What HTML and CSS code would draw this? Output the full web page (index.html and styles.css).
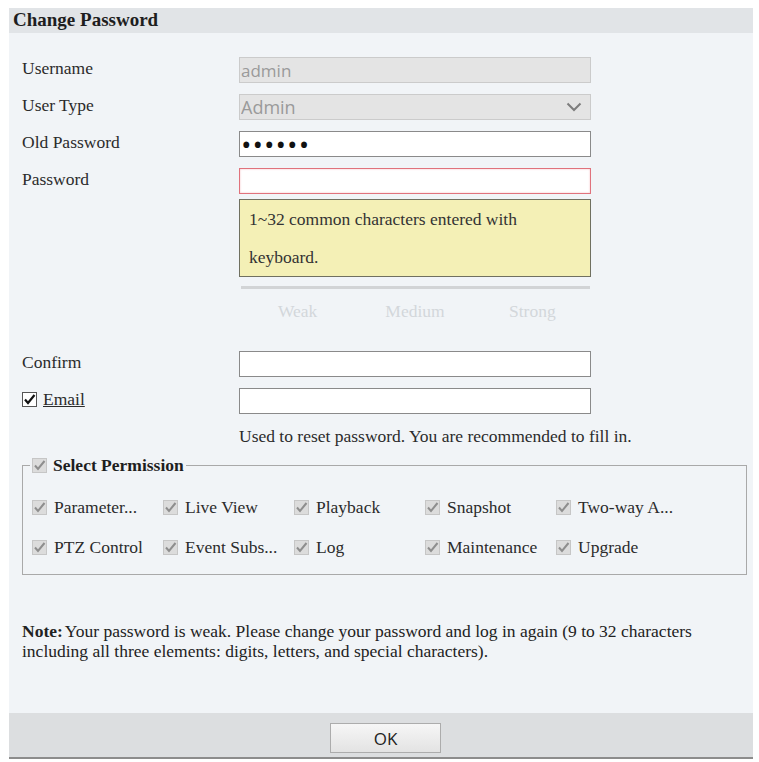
FILE: index.html
```html
<!DOCTYPE html>
<html lang="en">

<head>
    <meta charset="UTF-8" />
    <title>Change Password</title>
    <link rel="stylesheet" href="styles.css">
</head>

<body>
    <div class="dialog">
        <div class="dialog-title">Change Password</div>

        <div class="dialog-body">
            <div class="form-row">
                <label class="form-label">Username</label>
                <input class="form-field is-disabled" value="admin" readonly>
            </div>
            <div class="form-row">
                <label class="form-label">User Type</label>
                <div class="select-wrap">
                    <select class="form-field is-disabled select-field" disabled>
                        <option>Admin</option>
                    </select>
                    <svg class="select-arrow" width="16" height="10" viewBox="0 0 16 10">
                        <path d="M1.5 1.5 L8 8 L14.5 1.5" fill="none" stroke="#7d7d7d" stroke-width="2" />
                    </svg>
                </div>
            </div>
            <div class="form-row">
                <label class="form-label">Old Password</label>
                <input type="password" class="form-field pwd-field" value="123456">
            </div>
            <div class="form-row">
                <label class="form-label">Password</label>
                <input type="password" class="form-field is-error">
            </div>

            <!-- hint for password -->
            <div class="pwd-tip">1~32 common characters entered with keyboard.</div>

            <div class="strength">
                <div class="strength-bar"></div>
                <div class="strength-labels">
                    <span>Weak</span>
                    <span>Medium</span>
                    <span>Strong</span>
                </div>
            </div>

            <div class="form-row row-confirm">
                <label class="form-label">Confirm</label>
                <input type="password" class="form-field">
            </div>
            <div class="form-row">
                <label class="form-label">
                    <span class="cb cb-on">
                        <svg width="13" height="13" viewBox="0 0 13 13">
                            <path d="M2 6.5 L5 10 L11.5 2" fill="none" stroke="#111" stroke-width="2.2" />
                        </svg>
                    </span>
                    <span class="email-text">Email</span>
                </label>
                <input type="text" class="form-field">
            </div>
            <div class="hint">Used to reset password. You are recommended to fill in.</div>

            <fieldset class="perm">
                <legend class="perm-legend">
                    <span class="cb cb-off">
                        <svg width="13" height="13" viewBox="0 0 13 13">
                            <path d="M2 6.5 L5 10 L11.5 2" fill="none" stroke="#8e8e8e" stroke-width="2" />
                        </svg>
                    </span>
                    Select Permission
                </legend>
                <div class="perm-grid">
                    <div class="perm-item"><span class="cb cb-off"><svg width="13" height="13" viewBox="0 0 13 13"><path d="M2 6.5 L5 10 L11.5 2" fill="none" stroke="#8e8e8e" stroke-width="2" /></svg></span>Parameter...</div>
                    <div class="perm-item"><span class="cb cb-off"><svg width="13" height="13" viewBox="0 0 13 13"><path d="M2 6.5 L5 10 L11.5 2" fill="none" stroke="#8e8e8e" stroke-width="2" /></svg></span>Live View</div>
                    <div class="perm-item"><span class="cb cb-off"><svg width="13" height="13" viewBox="0 0 13 13"><path d="M2 6.5 L5 10 L11.5 2" fill="none" stroke="#8e8e8e" stroke-width="2" /></svg></span>Playback</div>
                    <div class="perm-item"><span class="cb cb-off"><svg width="13" height="13" viewBox="0 0 13 13"><path d="M2 6.5 L5 10 L11.5 2" fill="none" stroke="#8e8e8e" stroke-width="2" /></svg></span>Snapshot</div>
                    <div class="perm-item"><span class="cb cb-off"><svg width="13" height="13" viewBox="0 0 13 13"><path d="M2 6.5 L5 10 L11.5 2" fill="none" stroke="#8e8e8e" stroke-width="2" /></svg></span>Two-way A...</div>
                    <div class="perm-item"><span class="cb cb-off"><svg width="13" height="13" viewBox="0 0 13 13"><path d="M2 6.5 L5 10 L11.5 2" fill="none" stroke="#8e8e8e" stroke-width="2" /></svg></span>PTZ Control</div>
                    <div class="perm-item"><span class="cb cb-off"><svg width="13" height="13" viewBox="0 0 13 13"><path d="M2 6.5 L5 10 L11.5 2" fill="none" stroke="#8e8e8e" stroke-width="2" /></svg></span>Event Subs...</div>
                    <div class="perm-item"><span class="cb cb-off"><svg width="13" height="13" viewBox="0 0 13 13"><path d="M2 6.5 L5 10 L11.5 2" fill="none" stroke="#8e8e8e" stroke-width="2" /></svg></span>Log</div>
                    <div class="perm-item"><span class="cb cb-off"><svg width="13" height="13" viewBox="0 0 13 13"><path d="M2 6.5 L5 10 L11.5 2" fill="none" stroke="#8e8e8e" stroke-width="2" /></svg></span>Maintenance</div>
                    <div class="perm-item"><span class="cb cb-off"><svg width="13" height="13" viewBox="0 0 13 13"><path d="M2 6.5 L5 10 L11.5 2" fill="none" stroke="#8e8e8e" stroke-width="2" /></svg></span>Upgrade</div>
                </div>
            </fieldset>

            <p class="note"><b class="note-head">Note:</b>Your password is weak. Please change your password and log in again (9 to 32 characters including all three elements: digits, letters, and special characters).</p>
        </div>

        <div class="dialog-footer">
            <button class="btn-ok">OK</button>
        </div>
    </div>
</body>

</html>
```

FILE: styles.css
```css
/* base reset */
* {
    margin: 0;
    padding: 0;
    box-sizing: border-box;
}

html,
body {
    width: 100%;
    height: 100%;
    background-color: #fff;
    font-family: "Liberation Serif", "Times New Roman", serif;
    font-size: 17.5px;
    color: #2b2b2b;
    overflow: hidden;
}

/* dialog window */
.dialog {
    display: flex;
    flex-direction: column;
    width: 744px;
    height: 751px;
    margin: 8px 0 0 9px;
    background-color: #f1f4f7;
}

.dialog-title {
    height: 25px;
    line-height: 24px;
    padding-left: 4px;
    background-color: #e1e4e7;
    font-size: 19px;
    font-weight: bold;
    color: #1e1e1e;
}

.dialog-body {
    flex: 1;
    padding: 24px 0 0 13px;
}

/* form rows */
.form-row {
    display: flex;
    align-items: center;
    height: 26px;
    margin-bottom: 11px;
}

.form-label {
    display: flex;
    align-items: center;
    width: 217px;
    flex-shrink: 0;
    margin-top: -3px;
}

.form-field {
    width: 352px;
    height: 26px;
    border: 1px solid #8a8a8a;
    background-color: #fff;
    padding: 0 1px;
    font-family: "Open Sans", "Liberation Sans", sans-serif;
    font-size: 17px;
    color: #333;
    outline: none;
}

.form-field.is-disabled {
    background-color: #e4e4e4;
    border-color: #cbcbcb;
    color: #9a9a9a;
}

.form-field.is-error {
    border-color: #e0727c;
    box-shadow: inset 0 0 2px #f4b6bb;
}

.pwd-field {
    font-size: 28px;
    letter-spacing: 1px;
    color: #111;
}

.select-wrap {
    position: relative;
    height: 26px;
}

.select-field {
    appearance: none;
    -webkit-appearance: none;
    font-size: 18px;
    color: #8c8c8c;
    opacity: 1;
}

.select-arrow {
    position: absolute;
    right: 9px;
    top: 8px;
}

/* password hint */
.pwd-tip {
    width: 352px;
    height: 78px;
    margin: -6px 0 0 217px;
    padding: 0 50px 0 9px;
    border: 1px solid #707060;
    background-color: #f4f0b6;
    line-height: 38px;
    color: #333;
}

.strength {
    width: 352px;
    margin-left: 217px;
}

.strength-bar {
    height: 3px;
    margin: 9px 1px 0 2px;
    background-color: #d2d4d6;
}

.strength-labels {
    display: flex;
    margin-top: 12px;
    line-height: 20px;
    color: #d3d7db;
}

.strength-labels span {
    flex: 1;
    text-align: center;
}

.row-confirm {
    margin-top: 30px;
}

/* checkboxes */
.cb {
    display: inline-flex;
    align-items: center;
    justify-content: center;
    width: 15px;
    height: 15px;
    flex-shrink: 0;
}

.cb-on {
    background-color: #fff;
    border: 1px solid #555;
}

.cb-off {
    background-color: #dcdcdc;
    border: 1px solid #c6c6c6;
}

.email-text {
    margin-left: 6px;
    text-decoration: underline;
}

.hint {
    margin: 12px 0 0 217px;
    line-height: 20px;
}

/* permissions block */
.perm {
    width: 725px;
    margin-top: 9px;
    padding: 22px 0 17px 7px;
    border: 1px solid #a9a9a9;
}

.perm-legend {
    display: flex;
    align-items: center;
    gap: 6px;
    padding: 0 2px;
    line-height: 20px;
    font-weight: bold;
    color: #1e1e1e;
}

.perm-grid {
    display: grid;
    grid-template-columns: repeat(5, 131px);
    row-gap: 20px;
    margin-left: 2px;
}

.perm-item {
    display: flex;
    align-items: center;
    gap: 7px;
    line-height: 20px;
    white-space: nowrap;
}

.note {
    margin-top: 46px;
    padding-right: 30px;
    line-height: 20px;
    color: #222;
}

.note-head {
    margin-right: 2px;
}

/* footer */
.dialog-footer {
    display: flex;
    justify-content: center;
    height: 46px;
    padding: 10px 0 0 9px;
    background-color: #dcdee0;
    border-bottom: 2px solid #8c8c8c;
}

.btn-ok {
    width: 111px;
    height: 30px;
    border: 1px solid #acacac;
    background: linear-gradient(#f6f6f6, #e3e3e3);
    font-family: "Open Sans", "Liberation Sans", sans-serif;
    font-size: 17px;
    color: #222;
    cursor: pointer;
}
```
